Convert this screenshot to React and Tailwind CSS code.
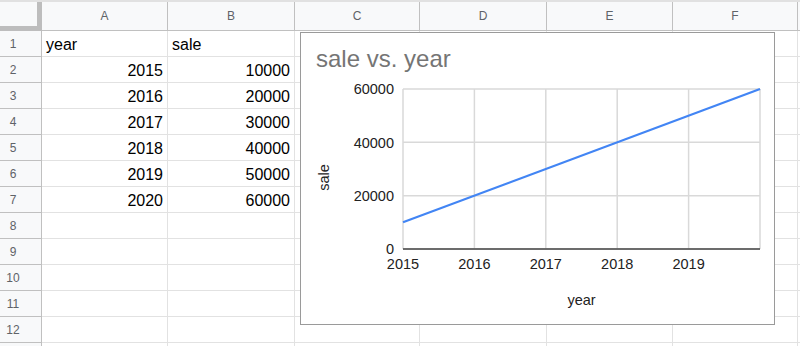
import React from "react";

const columns = [
  { label: "A", w: "w-[126px]" },
  { label: "B", w: "w-[127px]" },
  { label: "C", w: "w-[125px]" },
  { label: "D", w: "w-[127px]" },
  { label: "E", w: "w-[126px]" },
  { label: "F", w: "w-[125px]" },
];

const data = [
  ["year", "sale"],
  [2015, 10000],
  [2016, 20000],
  [2017, 30000],
  [2018, 40000],
  [2019, 50000],
  [2020, 60000],
];

const ROWS = 13;
const NUMBERED = 12;

function Chart() {
  // plot area in chart-box coordinates
  const left = 103;
  const right = 460;
  const top = 57;
  const bottom = 217;
  const xs = [0, 1, 2, 3, 4, 5].map(i => left + ((right - left) * i) / 5);
  const ys = [0, 1, 2, 3].map(i => top + ((bottom - top) * i) / 3);
  const yLabels = ["60000", "40000", "20000", "0"];
  const xLabels = ["2015", "2016", "2017", "2018", "2019"];
  const y10k = bottom - (bottom - top) / 6;

  return (
    <div className="absolute left-[300px] top-[32px] w-[475px] h-[293px] border border-[#9a9a9a] bg-white">
      <svg width="473" height="291" viewBox="1 1 473 291" className="block">
        <text x="16" y="35" fontSize="24" fill="#757575" fontFamily="'Liberation Sans', Arial, sans-serif">
          sale vs. year
        </text>

        {xs.map((x, i) => (
          <line key={"v" + i} x1={x} y1={top} x2={x} y2={bottom} stroke="#d9d9d9" strokeWidth="1.5" />
        ))}
        {ys.map((y, i) => (
          <line key={"h" + i} x1={left} y1={y} x2={right} y2={y} stroke="#d9d9d9" strokeWidth="1.5" />
        ))}
        <line x1={left} y1={bottom} x2={right} y2={bottom} stroke="#444" strokeWidth="1.5" />

        <line x1={left} y1={y10k} x2={right} y2={top} stroke="#4285f4" strokeWidth="2.2" />

        <g fontSize="14.5" fill="#222" fontFamily="'Liberation Sans', Arial, sans-serif">
          {yLabels.map((t, i) => (
            <text key={t} x="94" y={ys[i] + 5.2} textAnchor="end">
              {t}
            </text>
          ))}
          {xLabels.map((t, i) => (
            <text key={t} x={xs[i]} y="237" textAnchor="middle">
              {t}
            </text>
          ))}
          <text x="281.5" y="273" textAnchor="middle">
            year
          </text>
          <text x="29" y="145.5" textAnchor="middle" transform="rotate(-90 29 145.5)">
            sale
          </text>
        </g>
      </svg>
    </div>
  );
}

export default function App() {
  return (
    <div className="relative w-[800px] h-[346px] overflow-hidden bg-white font-['Liberation_Sans',Arial,sans-serif]">
      <div className="h-[2px] bg-[#e1e1e1]" />

      {/* column headers */}
      <div className="flex h-[29px]">
        <div className="w-[42px] shrink-0 bg-[#f8f9fa] border-r-[5px] border-b-[5px] border-[#bdbdbd]" />
        {columns.map(c => (
          <div
            key={c.label}
            className={`${c.w} shrink-0 bg-[#f8f9fa] border-r border-b border-[#c0c0c0] flex items-center justify-center text-[12px] text-[#5f6368]`}
          >
            {c.label}
          </div>
        ))}
        <div className="w-[40px] shrink-0 bg-[#f8f9fa] border-b border-[#c0c0c0]" />
      </div>

      {/* rows */}
      {Array.from({ length: ROWS }, (_, r) => {
        const row = data[r];
        return (
          <div key={r} className="flex h-[26px]">
            <div className="w-[42px] shrink-0 bg-[#f8f9fa] border-r border-b border-[#c0c0c0] flex items-center">
              <span className="w-[26px] text-center text-[12px] text-[#5f6368]">
                {r < NUMBERED ? r + 1 : ""}
              </span>
            </div>
            {columns.map((c, ci) => {
              const v = row ? row[ci] : undefined;
              const isNum = typeof v === "number";
              return (
                <div
                  key={c.label}
                  className={`${c.w} shrink-0 border-r border-b border-[#e2e2e2] flex items-end pb-[2px] px-[4px] text-[16px] leading-[18px] text-black ${
                    isNum ? "justify-end" : "justify-start"
                  }`}
                >
                  {v}
                </div>
              );
            })}
            <div className="w-[40px] shrink-0 border-b border-[#e2e2e2]" />
          </div>
        );
      })}

      <Chart />
    </div>
  );
}
